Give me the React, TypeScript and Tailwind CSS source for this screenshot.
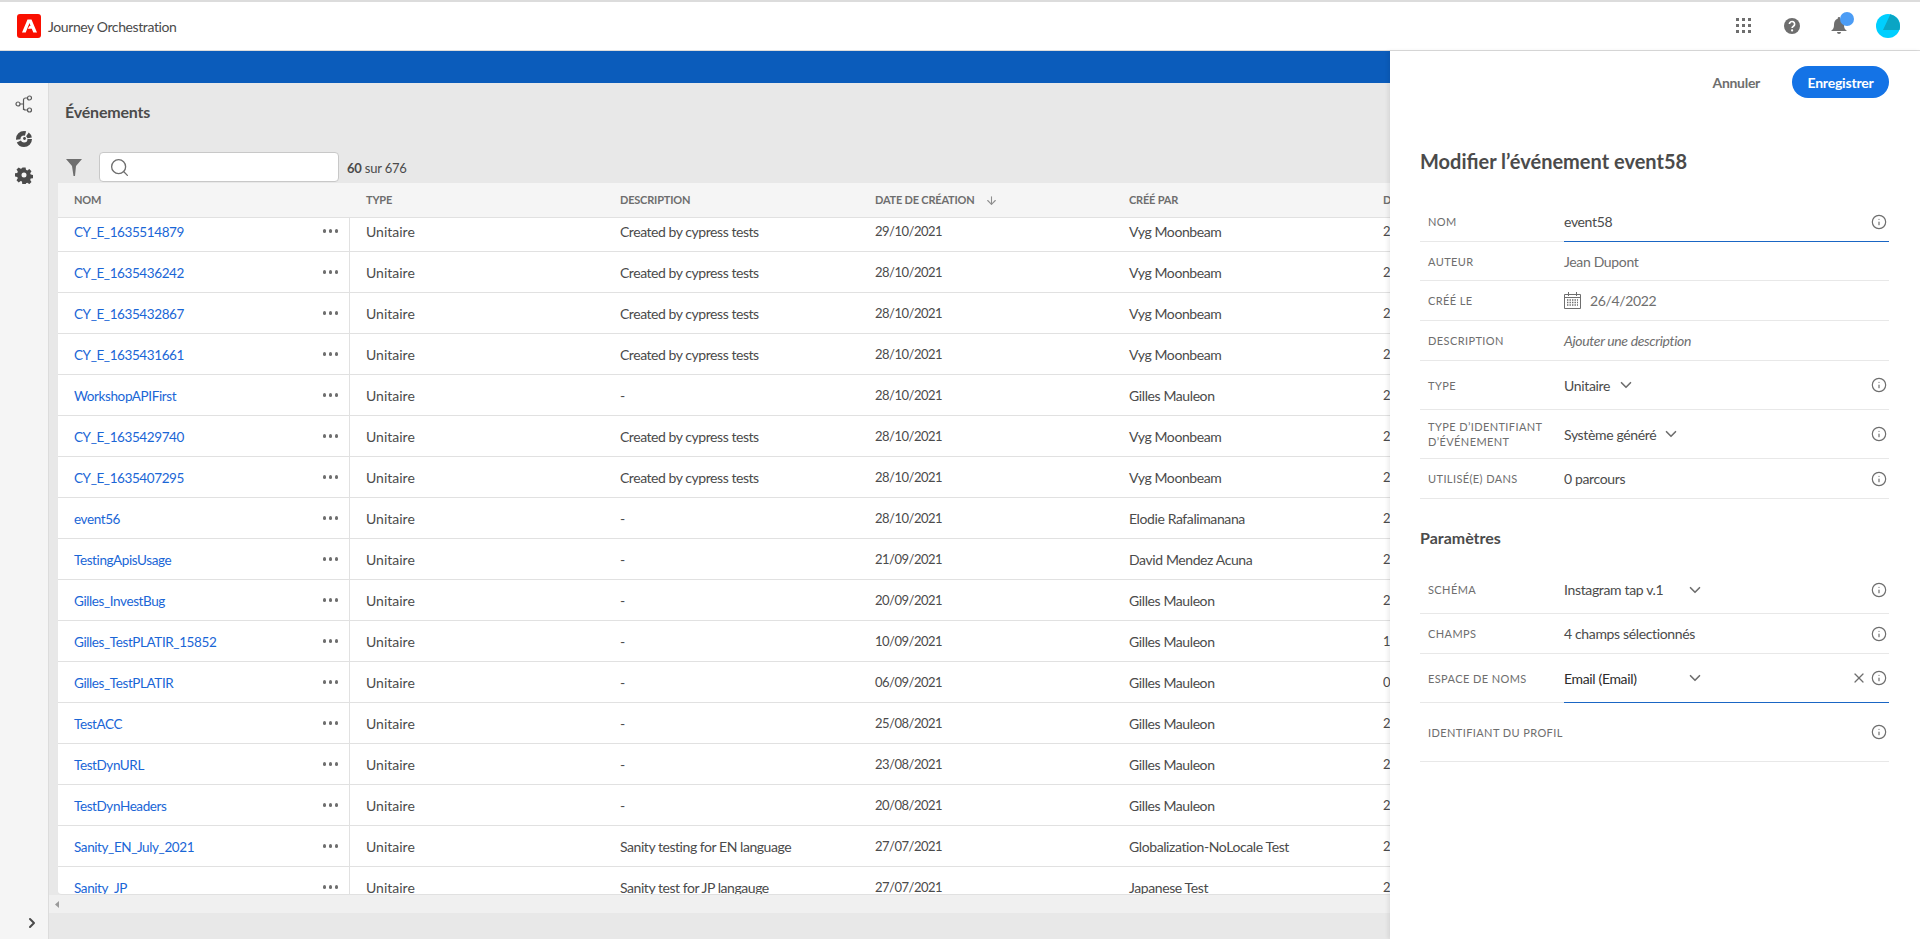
import React from 'react';
import { ArrowDown, ChevronDown, ChevronRight, Info, Search, X } from 'lucide-react';

interface EventRow {
    name: string;
    description: string;
    created: string;
    author: string;
    updated: string;
}

const rows: EventRow[] = [
    { name: 'CY_E_1635514879', description: 'Created by cypress tests', created: '29/10/2021', author: 'Vyg Moonbeam', updated: '29/10/2021' },
    { name: 'CY_E_1635436242', description: 'Created by cypress tests', created: '28/10/2021', author: 'Vyg Moonbeam', updated: '28/10/2021' },
    { name: 'CY_E_1635432867', description: 'Created by cypress tests', created: '28/10/2021', author: 'Vyg Moonbeam', updated: '28/10/2021' },
    { name: 'CY_E_1635431661', description: 'Created by cypress tests', created: '28/10/2021', author: 'Vyg Moonbeam', updated: '28/10/2021' },
    { name: 'WorkshopAPIFirst', description: '-', created: '28/10/2021', author: 'Gilles Mauleon', updated: '28/10/2021' },
    { name: 'CY_E_1635429740', description: 'Created by cypress tests', created: '28/10/2021', author: 'Vyg Moonbeam', updated: '28/10/2021' },
    { name: 'CY_E_1635407295', description: 'Created by cypress tests', created: '28/10/2021', author: 'Vyg Moonbeam', updated: '28/10/2021' },
    { name: 'event56', description: '-', created: '28/10/2021', author: 'Elodie Rafalimanana', updated: '28/10/2021' },
    { name: 'TestingApisUsage', description: '-', created: '21/09/2021', author: 'David Mendez Acuna', updated: '21/09/2021' },
    { name: 'Gilles_InvestBug', description: '-', created: '20/09/2021', author: 'Gilles Mauleon', updated: '20/09/2021' },
    { name: 'Gilles_TestPLATIR_15852', description: '-', created: '10/09/2021', author: 'Gilles Mauleon', updated: '1' },
    { name: 'Gilles_TestPLATIR', description: '-', created: '06/09/2021', author: 'Gilles Mauleon', updated: '0' },
    { name: 'TestACC', description: '-', created: '25/08/2021', author: 'Gilles Mauleon', updated: '2' },
    { name: 'TestDynURL', description: '-', created: '23/08/2021', author: 'Gilles Mauleon', updated: '2' },
    { name: 'TestDynHeaders', description: '-', created: '20/08/2021', author: 'Gilles Mauleon', updated: '2' },
    { name: 'Sanity_EN_July_2021', description: 'Sanity testing for EN language', created: '27/07/2021', author: 'Globalization-NoLocale Test', updated: '2' },
    { name: 'Sanity_JP', description: 'Sanity test for JP langauge', created: '27/07/2021', author: 'Japanese Test', updated: '2' },
].map((row) => ({ ...row, updated: row.updated.slice(0, 1) }));

const AdobeLogo = () => (
    <div className="w-6 h-6 rounded-[3px] bg-[#fa0f00] flex items-center justify-center">
        <svg width="15" height="14" viewBox="0 0 30 26" fill="#fff">
            <path d="M11 0h8l11 26h-7.4l-3-7.6h-8L15 13l2 0-2-6-7.6 19H0z" />
        </svg>
    </div>
);

const JourneyIcon = () => (
    <svg width="18" height="18" viewBox="0 0 18 18" fill="none" stroke="#5a5a5a" strokeWidth="1.2">
        <circle cx="3" cy="9" r="2" />
        <circle cx="14.5" cy="3" r="2" />
        <circle cx="14.5" cy="15" r="2" />
        <path d="M5 9h3.5M8.5 15V5a2 2 0 0 1 2-2h2M8.5 13a2 2 0 0 0 2 2h2" />
    </svg>
);

const SegmentIcon = () => (
    <svg width="18" height="18" viewBox="0 0 18 18" fill="none" stroke="#4b4b4b">
        <circle cx="9" cy="9" r="5.75" strokeWidth="4.5" strokeDasharray="15 2 11 2 4 2" />
        <circle cx="9.5" cy="8.5" r="1.4" fill="#4b4b4b" stroke="none" />
    </svg>
);

const GearIcon = () => (
    <svg width="18" height="18" viewBox="0 0 18 18" fill="#4b4b4b">
        <path fillRule="evenodd" d="M7.4 1h3.2l.4 2.3 1.3.6 2-1.3 2.2 2.2-1.3 2 .5 1.3 2.3.4v3.2l-2.3.4-.5 1.3 1.3 2-2.2 2.2-2-1.3-1.3.5-.4 2.3H7.4L7 15.1l-1.3-.5-2 1.3-2.2-2.2 1.3-2-.5-1.3L0 10V6.8l2.3-.4.5-1.3-1.3-2L3.7.9l2 1.3L7 1.7zM9 6a2.500 2.500 0 1 0 0 5 2.500 2.500 0 0 0 0-5z" transform="translate(0 .5)" />
    </svg>
);

const CalendarIcon = () => (
    <svg width="17" height="17" viewBox="0 0 17 17" fill="none" stroke="#6e6e6e">
        <path d="M.5 2.5h16v14H.5zM.5 5.500h16M4.500 0v4M12.500 0v4" />
        <path d="M3 8h11M3 10.500h11M3 13h11" strokeWidth="1.4" strokeDasharray="1.4 1.1" />
    </svg>
);

const Dots = () => (
    <div className="flex gap-[2.5px]">
        <span className="w-[3.5px] h-[3.5px] rounded-full bg-[#6e6e6e]" />
        <span className="w-[3.5px] h-[3.5px] rounded-full bg-[#6e6e6e]" />
        <span className="w-[3.5px] h-[3.5px] rounded-full bg-[#6e6e6e]" />
    </div>
);

const Row = ({ row }: { row: EventRow }) => (
    <div className="flex h-[41px] shrink-0 items-center bg-white border-b border-[#e1e1e1] text-[14px] text-[#4b4b4b]">
        <div className="w-[292px] h-full shrink-0 flex items-center justify-between pl-4 pr-[11px] border-r border-[#e1e1e1]">
            <span className="pt-[2px] text-[13.5px] tracking-[-0.4px] text-[#1a66d6]">{row.name}</span>
            <Dots />
        </div>
        <div className="w-[270px] shrink-0 pl-4">Unitaire</div>
        <div className="w-[255px] shrink-0 tracking-[-0.45px]">{row.description}</div>
        <div className="w-[254px] shrink-0 pt-[2px] text-[13px] tracking-[-0.5px]">{row.created}</div>
        <div className="w-[254px] shrink-0 tracking-[-0.4px]">{row.author}</div>
        <div className="w-[7px] shrink-0 overflow-hidden pt-[2px] text-[13px]">{row.updated}</div>
    </div>
);

const Table = () => (
    <div className="ml-[9px] flex flex-col min-h-0 w-[1332px] overflow-hidden">
        <div className="flex h-[35px] shrink-0 items-center bg-[#f5f5f5] border-b border-[#e1e1e1] text-[11px] font-bold tracking-[-0.2px] text-[#6e6e6e]">
            <div className="w-[292px] shrink-0 pl-4">NOM</div>
            <div className="w-[270px] shrink-0 pl-4">TYPE</div>
            <div className="w-[255px] shrink-0">DESCRIPTION</div>
            <div className="w-[254px] shrink-0 flex items-center gap-[10px]">
                <span>DATE DE CRÉATION</span>
                <ArrowDown size={13} strokeWidth={2} className="text-[#8e8e8e]" />
            </div>
            <div className="w-[254px] shrink-0">CRÉÉ PAR</div>
            <div className="w-[7px] shrink-0 overflow-hidden">D</div>
        </div>
        <div className="h-[677px] overflow-hidden rounded-bl-[4px] border-b border-[#e1e1e1]">
            <div className="-mt-[7px] flex flex-col">
                {rows.map((row) => (
                    <Row key={row.name} row={row} />
                ))}
            </div>
        </div>
    </div>
);

const FieldInfo = () => <Info size={16} strokeWidth={1.8} className="text-[#6e6e6e] shrink-0" />;

const FieldChevron = () => <ChevronDown size={18} strokeWidth={2.2} className="text-[#6e6e6e]" />;

interface FieldProps {
    label: React.ReactNode;
    height: number;
    active?: boolean;
    info?: boolean;
    clear?: boolean;
    children?: React.ReactNode;
}

const Field = ({ label, height, active, info, clear, children }: FieldProps) => (
    <div style={{ height }} className="relative flex items-center border-b border-[#e8e8e8]">
        <div className="w-[144px] shrink-0 pl-2 whitespace-nowrap text-[11px] leading-[15px] tracking-[0.4px] text-[#6e6e6e]">{label}</div>
        <div className="flex-1 flex items-center text-[14px] tracking-[-0.35px] text-[#4b4b4b]">{children}</div>
        {clear && <X size={16} strokeWidth={1.8} className="text-[#6e6e6e] mr-[4px]" />}
        {info && <div className="mr-[2px]"><FieldInfo /></div>}
        {active && <div className="absolute left-[144px] right-0 -bottom-px h-px bg-[#1a66c4]" />}
    </div>
);

const Drawer = () => (
    <aside className="absolute right-0 top-[51px] bottom-0 w-[530px] bg-white shadow-[-2px_0_4px_rgba(0,0,0,0.08)] pl-[30px] pr-[31px]">
        <div className="flex items-center justify-end pt-[15px] h-[47px]">
            <span className="text-[14px] font-bold tracking-[-0.3px] text-[#6e6e6e] mr-8">Annuler</span>
            <button className="h-8 w-[97px] rounded-full bg-[#1473e6] text-[14px] font-bold tracking-[-0.2px] text-white">Enregistrer</button>
        </div>
        <h1 className="mt-[50px] text-[20px] leading-[26px] font-bold text-[#4b4b4b]">Modifier l’événement event58</h1>
        <div className="mt-[28px] flex flex-col">
            <Field label="NOM" height={40} active info><span>event58</span></Field>
            <Field label="AUTEUR" height={39}><span className="text-[#6e6e6e]">Jean Dupont</span></Field>
            <Field label="CRÉÉ LE" height={40}>
                <CalendarIcon />
                <span className="ml-[9px] text-[#6e6e6e]">26/4/2022</span>
            </Field>
            <Field label="DESCRIPTION" height={40}><span className="italic text-[#6e6e6e]">Ajouter une description</span></Field>
            <Field label="TYPE" height={49} info>
                <span>Unitaire</span>
                <span className="ml-[7px]"><FieldChevron /></span>
            </Field>
            <Field label={<>TYPE D’IDENTIFIANT<br />D’ÉVÉNEMENT</>} height={49} info>
                <span>Système généré</span>
                <span className="ml-[6px]"><FieldChevron /></span>
            </Field>
            <Field label="UTILISÉ(E) DANS" height={40} info><span>0 parcours</span></Field>
        </div>
        <h2 className="mt-[29px] text-[16px] leading-[20px] font-bold text-[#4b4b4b]">Paramètres</h2>
        <div className="mt-[18px] flex flex-col">
            <Field label="SCHÉMA" height={48} info>
                <span className="w-[122px]">Instagram tap v.1</span>
                <FieldChevron />
            </Field>
            <Field label="CHAMPS" height={40} info><span>4 champs sélectionnés</span></Field>
            <Field label="ESPACE DE NOMS" height={49} active clear info>
                <span className="w-[122px] text-[#2c2c2c]">Email (Email)</span>
                <FieldChevron />
            </Field>
            <Field label="IDENTIFIANT DU PROFIL" height={59} info />
        </div>
    </aside>
);

const TopBar = () => (
    <header className="h-[51px] shrink-0 bg-white border-t-2 border-b border-[#dcdcdc] flex items-center pl-[17px] pr-5">
        <AdobeLogo />
        <span className="ml-[7px] text-[14px] tracking-[-0.4px] text-[#4b4b4b]">Journey Orchestration</span>
        <div className="ml-auto flex items-center">
            <svg width="16" height="16" viewBox="0 0 16 16" fill="#6e6e6e">
                {[1, 7, 13].map((y) =>
                    [1, 7, 13].map((x) => <rect key={`${x}-${y}`} x={x - 1} y={y - 1} width="3" height="3" />)
                )}
            </svg>
            <svg className="ml-[32px]" width="16" height="16" viewBox="0 0 16 16">
                <circle cx="8" cy="8" r="8" fill="#6e6e6e" />
                <path d="M5.400 6.100a2.600 2.600 0 1 1 4 2.200c-.9.6-1.300 1-1.300 1.800" fill="none" stroke="#fff" strokeWidth="1.7" />
                <circle cx="8.100" cy="12.400" r="1.100" fill="#fff" />
            </svg>
            <div className="relative ml-[31px] w-4 h-[18px]">
                <svg width="16" height="18" viewBox="0 0 16 18" fill="#6e6e6e">
                    <path d="M8 0a1.300 1.300 0 0 1 1.300 1.300v.5C11.900 2.500 13 5 13 8c0 3 .8 4.300 3 6H0c2.200-1.700 3-3 3-6 0-3 1.100-5.500 3.700-6.200v-.5A1.300 1.300 0 0 1 8 0zM6 15h4a2 2 0 0 1-4 0z" />
                </svg>
                <span className="absolute -top-[5px] left-[2px] ml-[7px] w-[14px] h-[14px] rounded-full bg-[#4b9cf5]" />
            </div>
            <svg className="ml-[29px]" width="24" height="24" viewBox="0 0 24 24">
                <circle cx="12" cy="12" r="12" fill="#00cfff" />
                <path d="M14 1 7 16h16.500A12 12 0 0 0 24 12 12 12 0 0 0 14 .2z" fill="#0aa5c4" />
            </svg>
        </div>
    </header>
);

const Sidebar = () => (
    <nav className="w-[49px] shrink-0 bg-[#f5f5f5] border-r border-[#dcdcdc] flex flex-col items-center pt-3 relative">
        <JourneyIcon />
        <div className="mt-[17px]"><SegmentIcon /></div>
        <div className="mt-[18px]"><GearIcon /></div>
        <ChevronRight size={16} strokeWidth={3} className="text-[#4b4b4b] absolute bottom-[8px] left-[24px]" />
    </nav>
);

const App = () => {
    return (
        <div className="relative w-[1920px] h-[939px] overflow-hidden flex flex-col bg-white font-['Lato','Liberation_Sans',sans-serif]">
            <TopBar />
            <div className="h-[32px] shrink-0 bg-[#0b5cbb]" />
            <div className="flex flex-1 min-h-0">
                <Sidebar />
                <main className="flex-1 min-w-0 bg-[#e8e8e8] flex flex-col">
                    <h1 className="ml-4 mt-[19px] h-[20px] text-[16px] leading-[20px] font-bold tracking-[-0.2px] text-[#4b4b4b]">Événements</h1>
                    <div className="ml-[17px] mt-[30px] h-[31px] shrink-0 flex items-start">
                        <svg className="mt-[7px]" width="16" height="17" viewBox="0 0 16 17" fill="#6e6e6e">
                            <path d="M0 0h16L10 7l-1 10H7.500L6 7z" />
                        </svg>
                        <div className="ml-[17px] w-[240px] h-[30px] bg-white border border-[#c8c8c8] rounded-[4px] flex items-center pl-[9px]">
                            <Search size={21} strokeWidth={1.5} className="text-[#6e6e6e]" />
                        </div>
                        <span className="ml-2 mt-[7px] text-[13px] leading-[18px] tracking-[-0.2px] text-[#4b4b4b]"><b>60</b> sur 676</span>
                    </div>
                    <Table />
                    <div className="h-[18px] shrink-0 bg-[#f0f0f0] flex items-center pl-[6px]">
                        <svg width="4" height="7" viewBox="0 0 4 7" fill="#9a9a9a">
                            <path d="M4 0v7L0 3.500z" />
                        </svg>
                    </div>
                </main>
            </div>
            <Drawer />
        </div>
    );
};

export default App;
